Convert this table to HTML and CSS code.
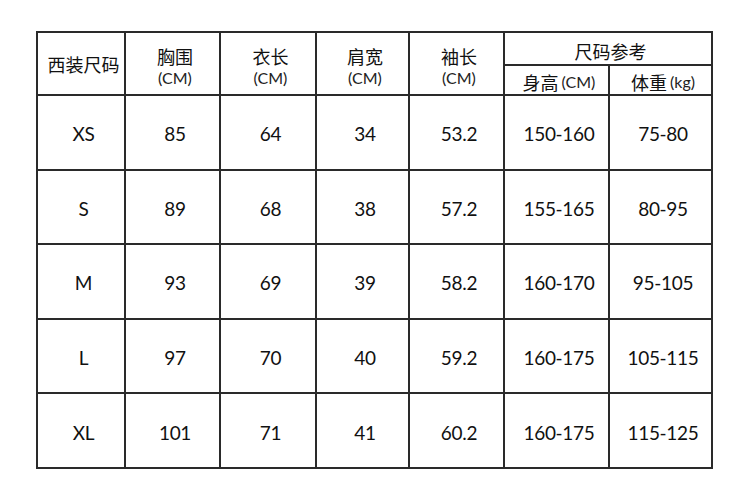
FILE: index.html
```html
<!DOCTYPE html>
<html lang="zh">
<head>
<meta charset="utf-8">
<link rel="stylesheet" href="styles.css">
</head>
<body>
<div class="chart">
  <div class="cell h span2 title">西装尺码</div>
  <div class="cell h span2"><span class="zh">胸围</span><span class="unit">(CM)</span></div>
  <div class="cell h span2"><span class="zh">衣长</span><span class="unit">(CM)</span></div>
  <div class="cell h span2"><span class="zh">肩宽</span><span class="unit">(CM)</span></div>
  <div class="cell h span2"><span class="zh">袖长</span><span class="unit">(CM)</span></div>
  <div class="cell ref">尺码参考</div>
  <div class="cell sub"><span class="zh">身高</span><span class="unit">(CM)</span></div>
  <div class="cell sub"><span class="zh">体重</span><span class="unit">(kg)</span></div>

  <div class="cell d">XS</div><div class="cell d">85</div><div class="cell d">64</div><div class="cell d">34</div><div class="cell d">53.2</div><div class="cell d">150-160</div><div class="cell d">75-80</div>
  <div class="cell d">S</div><div class="cell d">89</div><div class="cell d">68</div><div class="cell d">38</div><div class="cell d">57.2</div><div class="cell d">155-165</div><div class="cell d">80-95</div>
  <div class="cell d">M</div><div class="cell d">93</div><div class="cell d">69</div><div class="cell d">39</div><div class="cell d">58.2</div><div class="cell d">160-170</div><div class="cell d">95-105</div>
  <div class="cell d">L</div><div class="cell d">97</div><div class="cell d">70</div><div class="cell d">40</div><div class="cell d">59.2</div><div class="cell d">160-175</div><div class="cell d">105-115</div>
  <div class="cell d">XL</div><div class="cell d">101</div><div class="cell d">71</div><div class="cell d">41</div><div class="cell d">60.2</div><div class="cell d">160-175</div><div class="cell d">115-125</div>
</div>
</body>
</html>
```

FILE: styles.css
```css
html, body {
  margin: 0;
  padding: 0;
  background: #fff;
}
body {
  padding: 31px 0 0 36px;
  font-family: "Lato", "Noto Sans CJK SC", sans-serif;
  color: #111;
}
.chart {
  box-sizing: border-box;
  width: 677px;
  height: 438px;
  border: 2px solid #2a2a2a;
  background: #2a2a2a;
  display: grid;
  grid-template-columns: 86px 93px 94px 91px 93px 103px 101px;
  grid-template-rows: 31px 28px repeat(5, 1fr);
  gap: 2px;
}
.cell {
  background: #fff;
  display: flex;
  align-items: center;
  justify-content: center;
  padding-left: 5px;
}
.span2 {
  grid-row: span 2;
  flex-direction: column;
  padding-top: 4px;
}
.span2 .zh {
  margin-bottom: 2px;
}
.zh {
  font-family: "Noto Sans CJK SC", sans-serif;
  font-size: 18px;
  line-height: 22px;
}
.unit {
  font-family: "Lato", "Noto Sans CJK SC", sans-serif;
  font-size: 16px;
  line-height: 18px;
  color: #222;
}
.title {
  font-family: "Noto Sans CJK SC", sans-serif;
  font-size: 18px;
  padding-top: 0;
}
.ref {
  grid-column: span 2;
  font-family: "Noto Sans CJK SC", sans-serif;
  font-size: 18px;
  padding-top: 5px;
}
.sub {
  padding-top: 4px;
}
.sub .unit {
  margin-left: 3px;
  font-size: 16px;
}
.d {
  font-size: 19px;
  padding-top: 3px;
  letter-spacing: -0.3px;
}
```
